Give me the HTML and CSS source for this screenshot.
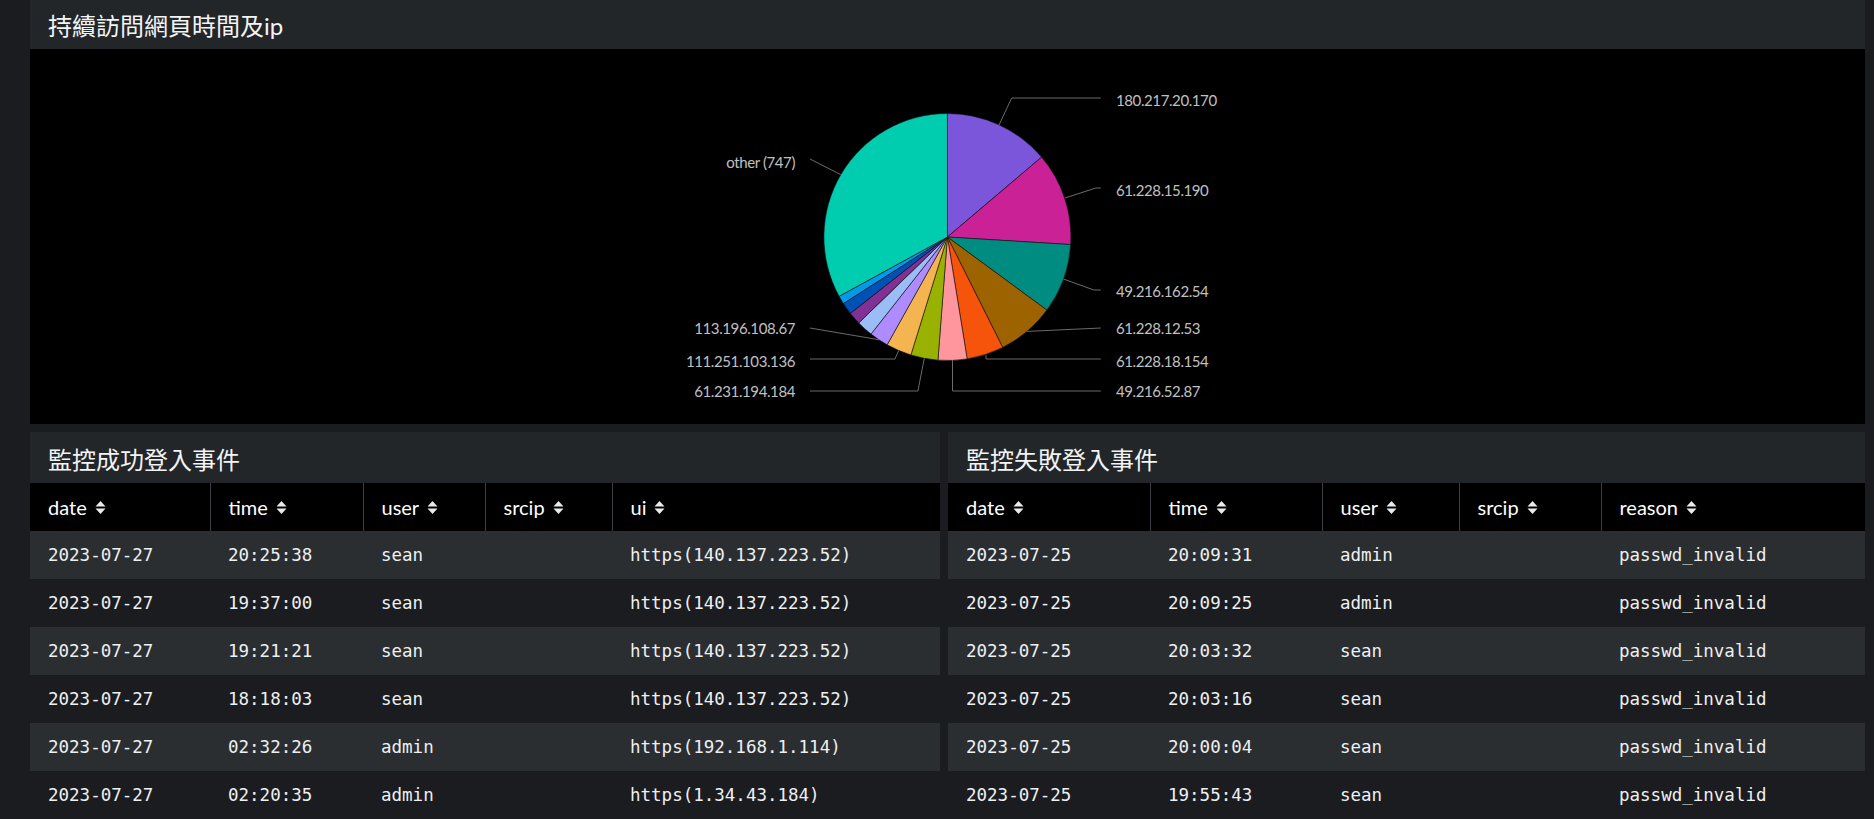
FILE: index.html
```html
<!DOCTYPE html>
<html lang="zh-Hant">
<head>
<meta charset="utf-8">
<title>Dashboard</title>
<link rel="stylesheet" href="styles.css">
</head>
<body>
<div class="dash">
  <section class="panel panel-top">
    <h2 class="panel-title">持續訪問網頁時間及ip</h2>
    <div class="chart">
      <svg class="pie" width="1835" height="375" viewBox="0 0 1835 375" xmlns="http://www.w3.org/2000/svg">
        <g transform="translate(917.4,188)" stroke="#111" stroke-width="0.6">
          <path fill="#7B56DB" d="M0,0 L0,-123.5 A123.5,123.5 0 0 1 94.19,-79.88 Z"/>
          <path fill="#CB2196" d="M0,0 L94.19,-79.88 A123.5,123.5 0 0 1 123.27,7.54 Z"/>
          <path fill="#008C80" d="M0,0 L123.27,7.54 A123.5,123.5 0 0 1 99.53,73.11 Z"/>
          <path fill="#9D6300" d="M0,0 L99.53,73.11 A123.5,123.5 0 0 1 55.30,110.43 Z"/>
          <path fill="#F6540B" d="M0,0 L55.30,110.43 A123.5,123.5 0 0 1 19.75,121.91 Z"/>
          <path fill="#FF969E" d="M0,0 L19.75,121.91 A123.5,123.5 0 0 1 -9.47,123.14 Z"/>
          <path fill="#99B100" d="M0,0 L-9.47,123.14 A123.5,123.5 0 0 1 -36.52,117.98 Z"/>
          <path fill="#F4B550" d="M0,0 L-36.52,117.98 A123.5,123.5 0 0 1 -60.26,107.80 Z"/>
          <path fill="#AE8CFF" d="M0,0 L-60.26,107.80 A123.5,123.5 0 0 1 -76.37,97.06 Z"/>
          <path fill="#9BBDF7" d="M0,0 L-76.37,97.06 A123.5,123.5 0 0 1 -88.69,85.94 Z"/>
          <path fill="#813193" d="M0,0 L-88.69,85.94 A123.5,123.5 0 0 1 -97.07,76.37 Z"/>
          <path fill="#0051B5" d="M0,0 L-97.07,76.37 A123.5,123.5 0 0 1 -104.09,66.54 Z"/>
          <path fill="#009CEB" d="M0,0 L-104.09,66.54 A123.5,123.5 0 0 1 -108.32,59.30 Z"/>
          <path fill="#00CDAF" d="M0,0 L-108.32,59.30 A123.5,123.5 0 0 1 0,-123.5 Z"/>
        </g>
        <g fill="none" stroke="#6b6b6b" stroke-width="1">
          <polyline points="969,76 981.7,49 1070.8,49"/>
          <polyline points="1035,149 1065.8,139 1070.8,139"/>
          <polyline points="1033.4,230 1063.9,241 1070.8,241"/>
          <polyline points="997,282.4 1070.8,279"/>
          <polyline points="956,306 956,310 1070.8,310"/>
          <polyline points="922.5,311 922.5,342 1070.8,342"/>
          <polyline points="780,110 810.6,125.5"/>
          <polyline points="780,279 848.9,290.7"/>
          <polyline points="780,310 864.9,310 868.7,301.5"/>
          <polyline points="780,342 887.9,342 894.3,309.3"/>
        </g>
        <g class="pie-label">
          <text x="1086" y="57">180.217.20.170</text>
          <text x="1086" y="147">61.228.15.190</text>
          <text x="1086" y="248">49.216.162.54</text>
          <text x="1086" y="285">61.228.12.53</text>
          <text x="1086" y="318">61.228.18.154</text>
          <text x="1086" y="348">49.216.52.87</text>
        </g>
        <g class="pie-label pie-label-left">
          <text x="765" y="119">other (747)</text>
          <text x="765" y="285">113.196.108.67</text>
          <text x="765" y="318">111.251.103.136</text>
          <text x="765" y="348">61.231.194.184</text>
        </g>
      </svg>
    </div>
  </section>

  <div class="row">
    <section class="panel">
      <h2 class="panel-title">監控成功登入事件</h2>
      <table class="grid">
        <colgroup>
          <col class="l1"><col class="l2"><col class="l3"><col class="l4"><col class="l5">
        </colgroup>
        <thead>
          <tr>
            <th><span class="th">date <svg class="sort" viewBox="0 0 11 15" width="11" height="15"><path d="M5.5 1 L10.5 6.5 L0.5 6.5 Z M5.5 14 L10.5 8.5 L0.5 8.5 Z"/></svg></span></th>
            <th><span class="th">time <svg class="sort" viewBox="0 0 11 15" width="11" height="15"><path d="M5.5 1 L10.5 6.5 L0.5 6.5 Z M5.5 14 L10.5 8.5 L0.5 8.5 Z"/></svg></span></th>
            <th><span class="th">user <svg class="sort" viewBox="0 0 11 15" width="11" height="15"><path d="M5.5 1 L10.5 6.5 L0.5 6.5 Z M5.5 14 L10.5 8.5 L0.5 8.5 Z"/></svg></span></th>
            <th><span class="th">srcip <svg class="sort" viewBox="0 0 11 15" width="11" height="15"><path d="M5.5 1 L10.5 6.5 L0.5 6.5 Z M5.5 14 L10.5 8.5 L0.5 8.5 Z"/></svg></span></th>
            <th><span class="th">ui <svg class="sort" viewBox="0 0 11 15" width="11" height="15"><path d="M5.5 1 L10.5 6.5 L0.5 6.5 Z M5.5 14 L10.5 8.5 L0.5 8.5 Z"/></svg></span></th>
          </tr>
        </thead>
        <tbody>
          <tr><td>2023-07-27</td><td>20:25:38</td><td>sean</td><td></td><td>https(140.137.223.52)</td></tr>
          <tr><td>2023-07-27</td><td>19:37:00</td><td>sean</td><td></td><td>https(140.137.223.52)</td></tr>
          <tr><td>2023-07-27</td><td>19:21:21</td><td>sean</td><td></td><td>https(140.137.223.52)</td></tr>
          <tr><td>2023-07-27</td><td>18:18:03</td><td>sean</td><td></td><td>https(140.137.223.52)</td></tr>
          <tr><td>2023-07-27</td><td>02:32:26</td><td>admin</td><td></td><td>https(192.168.1.114)</td></tr>
          <tr><td>2023-07-27</td><td>02:20:35</td><td>admin</td><td></td><td>https(1.34.43.184)</td></tr>
        </tbody>
      </table>
    </section>

    <section class="panel">
      <h2 class="panel-title">監控失敗登入事件</h2>
      <table class="grid">
        <colgroup>
          <col class="r1"><col class="r2"><col class="r3"><col class="r4"><col class="r5">
        </colgroup>
        <thead>
          <tr>
            <th><span class="th">date <svg class="sort" viewBox="0 0 11 15" width="11" height="15"><path d="M5.5 1 L10.5 6.5 L0.5 6.5 Z M5.5 14 L10.5 8.5 L0.5 8.5 Z"/></svg></span></th>
            <th><span class="th">time <svg class="sort" viewBox="0 0 11 15" width="11" height="15"><path d="M5.5 1 L10.5 6.5 L0.5 6.5 Z M5.5 14 L10.5 8.5 L0.5 8.5 Z"/></svg></span></th>
            <th><span class="th">user <svg class="sort" viewBox="0 0 11 15" width="11" height="15"><path d="M5.5 1 L10.5 6.5 L0.5 6.5 Z M5.5 14 L10.5 8.5 L0.5 8.5 Z"/></svg></span></th>
            <th><span class="th">srcip <svg class="sort" viewBox="0 0 11 15" width="11" height="15"><path d="M5.5 1 L10.5 6.5 L0.5 6.5 Z M5.5 14 L10.5 8.5 L0.5 8.5 Z"/></svg></span></th>
            <th><span class="th">reason <svg class="sort" viewBox="0 0 11 15" width="11" height="15"><path d="M5.5 1 L10.5 6.5 L0.5 6.5 Z M5.5 14 L10.5 8.5 L0.5 8.5 Z"/></svg></span></th>
          </tr>
        </thead>
        <tbody>
          <tr><td>2023-07-25</td><td>20:09:31</td><td>admin</td><td></td><td>passwd_invalid</td></tr>
          <tr><td>2023-07-25</td><td>20:09:25</td><td>admin</td><td></td><td>passwd_invalid</td></tr>
          <tr><td>2023-07-25</td><td>20:03:32</td><td>sean</td><td></td><td>passwd_invalid</td></tr>
          <tr><td>2023-07-25</td><td>20:03:16</td><td>sean</td><td></td><td>passwd_invalid</td></tr>
          <tr><td>2023-07-25</td><td>20:00:04</td><td>sean</td><td></td><td>passwd_invalid</td></tr>
          <tr><td>2023-07-25</td><td>19:55:43</td><td>sean</td><td></td><td>passwd_invalid</td></tr>
        </tbody>
      </table>
    </section>
  </div>
</div>
</body>
</html>
```

FILE: styles.css
```css
html, body {
  margin: 0;
  padding: 0;
  height: 819px;
  overflow: hidden;
  background: #1a1c20;
}

body {
  font-family: "Lato", "Noto Sans CJK TC", sans-serif;
  color: #e6e9ec;
}

.dash {
  padding: 0 9px 0 30px;
  display: flex;
  flex-direction: column;
  gap: 8px;
}

.panel {
  background: #232629;
  min-width: 0;
}

.panel-top {
  margin-top: -2px;
}

.panel-title {
  margin: 0;
  height: 51px;
  box-sizing: border-box;
  padding: 13px 18px 0;
  font-family: "Lato", "Noto Sans CJK TC", sans-serif;
  font-size: 24px;
  line-height: 30px;
  font-weight: 400;
  color: #f2f4f6;
}

.chart {
  background: #000;
  height: 375px;
  overflow: hidden;
}

.pie {
  display: block;
}

.pie-label text {
  font-family: "Lato", sans-serif;
  font-size: 15px;
  letter-spacing: -0.4px;
  fill: #c0c0c0;
}

.pie-label-left text {
  text-anchor: end;
}

.row {
  display: grid;
  grid-template-columns: 910fr 917fr;
  gap: 8px;
}

.grid {
  width: 100%;
  border-collapse: collapse;
  table-layout: fixed;
}

.l1 { width: 180px; }
.l2 { width: 153px; }
.l3 { width: 122px; }
.l4 { width: 127px; }
.l5 { width: auto; }

.r1 { width: 202px; }
.r2 { width: 172px; }
.r3 { width: 137px; }
.r4 { width: 142px; }
.r5 { width: auto; }

.grid th {
  background: #000;
  height: 48px;
  padding: 0 0 0 18px;
  text-align: left;
  font-family: "Lato", sans-serif;
  font-size: 20px;
  font-weight: 400;
  color: #fff;
  border-left: 1px solid #3c3f44;
  white-space: nowrap;
}

.grid th:first-child {
  border-left: none;
}

.th {
  display: inline-flex;
  align-items: center;
  gap: 8px;
}

.sort {
  fill: #e8eaec;
  display: block;
}

.grid td {
  height: 48px;
  padding: 0 0 0 18px;
  font-family: "DejaVu Sans Mono", "Liberation Mono", monospace;
  font-size: 17.5px;
  color: #eef0f2;
  white-space: nowrap;
  overflow: hidden;
}

.grid tbody tr:nth-child(odd) td {
  background: #2b2e31;
}

.grid tbody tr:nth-child(even) td {
  background: #1a1c20;
}
```
